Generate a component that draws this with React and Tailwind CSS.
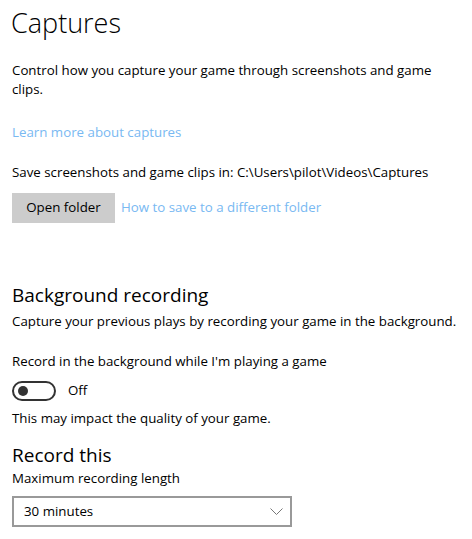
import React from "react";

const font = { fontFamily: '"Segoe UI", "Open Sans", "Noto Sans", sans-serif' };

export default function App() {
  return (
    <div className="w-[472px] h-[539px] bg-white text-black overflow-hidden" style={font}>
      <div className="pl-3 w-[460px] pt-[5px] text-[13.3px]">
        {/* Title */}
        <h1 className="text-[27px] leading-[36px] font-light -ml-[1px]">Captures</h1>

        <p className="mt-[20px] leading-[19px]">
          Control how you capture your game through screenshots and game clips.
        </p>

        <a className="block mt-[23px] leading-[20px] text-[#79b9f2]">
          Learn more about captures
        </a>

        <p className="mt-[20px] leading-[20px]">
          Save screenshots and game clips in: C:\Users\pilot\Videos\Captures
        </p>

        <div className="mt-[11px] flex items-center gap-[6px]">
          <button className="w-[103px] h-[30px] bg-[#cccccc]">Open folder</button>
          <a className="text-[#79b9f2]">How to save to a different folder</a>
        </div>

        {/* Background recording */}
        <h2 className="mt-[59px] text-[19px] leading-[26px]">Background recording</h2>
        <p className="mt-[3px] leading-[20px]">
          Capture your previous plays by recording your game in the background.
        </p>

        <p className="mt-[20px] leading-[20px]">
          Record in the background while I'm playing a game
        </p>
        <div className="mt-[10px] flex items-center gap-3">
          <div className="w-[44px] h-[20px] rounded-full border-2 border-[#333333] flex items-center pl-[4px]">
            <div className="w-[10px] h-[10px] rounded-full bg-[#333333]" />
          </div>
          <span>Off</span>
        </div>
        <p className="mt-[7px] leading-[20px]">This may impact the quality of your game.</p>

        {/* Record this */}
        <h2 className="mt-[14px] text-[19px] leading-[26px]">Record this</h2>
        <p className="leading-[20px]">Maximum recording length</p>
        <div className="mt-[8px] w-[280px] h-[31px] border-2 border-[#999999] flex items-center justify-between pl-[10px] pr-[7px]">
          <span>30 minutes</span>
          <svg width="13" height="7" viewBox="0 0 13 7" fill="none">
            <path d="M0.5 0.5 L6.5 6.5 L12.5 0.5" stroke="#777" strokeWidth="1" />
          </svg>
        </div>
      </div>
    </div>
  );
}
